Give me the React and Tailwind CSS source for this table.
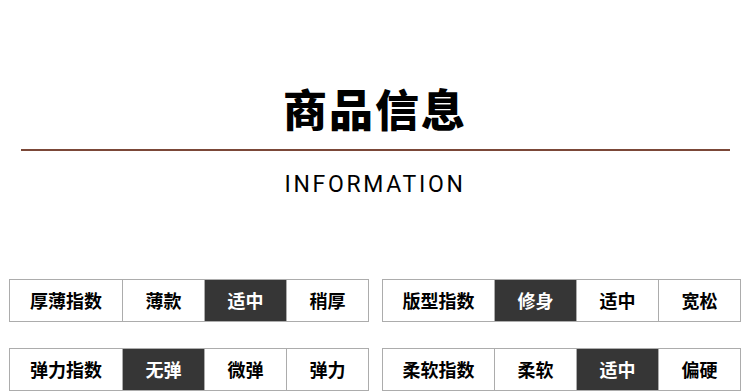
import React from "react";

const rows = [
  [
    { label: "厚薄指数", options: ["薄款", "适中", "稍厚"], active: 1, first: "w-[113px]" },
    { label: "版型指数", options: ["修身", "适中", "宽松"], active: 0, first: "w-[112px]" },
  ],
  [
    { label: "弹力指数", options: ["无弹", "微弹", "弹力"], active: 0, first: "w-[113px]" },
    { label: "柔软指数", options: ["柔软", "适中", "偏硬"], active: 1, first: "w-[112px]" },
  ],
];

function IndexTable({ label, options, active, first }) {
  return (
    <div className="flex h-[43px] border-y border-l border-[#acacac]">
      <div className={`${first} flex items-center justify-center border-r border-[#acacac] text-[18px] font-bold text-black`}>
        {label}
      </div>
      {options.map((opt, i) => (
        <div
          key={opt}
          className={
            i === active
              ? "w-[82px] flex items-center justify-center border-r border-[#acacac] bg-[#363636] text-[18px] font-bold text-white"
              : "w-[82px] flex items-center justify-center border-r border-[#acacac] text-[18px] font-bold text-black"
          }
        >
          {opt}
        </div>
      ))}
    </div>
  );
}

export default function App() {
  return (
    <div
      className="w-[750px] h-[391px] overflow-hidden bg-white"
      style={{ fontFamily: '"Noto Sans CJK SC", "Noto Sans", sans-serif' }}
    >
      <div className="flex flex-col">
        <h1 className="mt-[86px] text-center text-[44px] leading-[44px] font-black tracking-[2px] text-black">
          商品信息
        </h1>
        <div className="mt-[19px] ml-[21px] mr-[20px] h-[2px] bg-[#7b4838]" />
        <div
          className="mt-[22px] text-center text-[23px] leading-[23px] tracking-[2.7px] text-black"
          style={{ fontFamily: 'Roboto, "Liberation Sans", sans-serif' }}
        >
          INFORMATION
        </div>
        <div className="mt-[83px] flex flex-col gap-[26px] pl-[9px]">
          {rows.map((pair, r) => (
            <div key={r} className="flex gap-[13px]">
              {pair.map((t) => (
                <IndexTable key={t.label} {...t} />
              ))}
            </div>
          ))}
        </div>
      </div>
    </div>
  );
}
